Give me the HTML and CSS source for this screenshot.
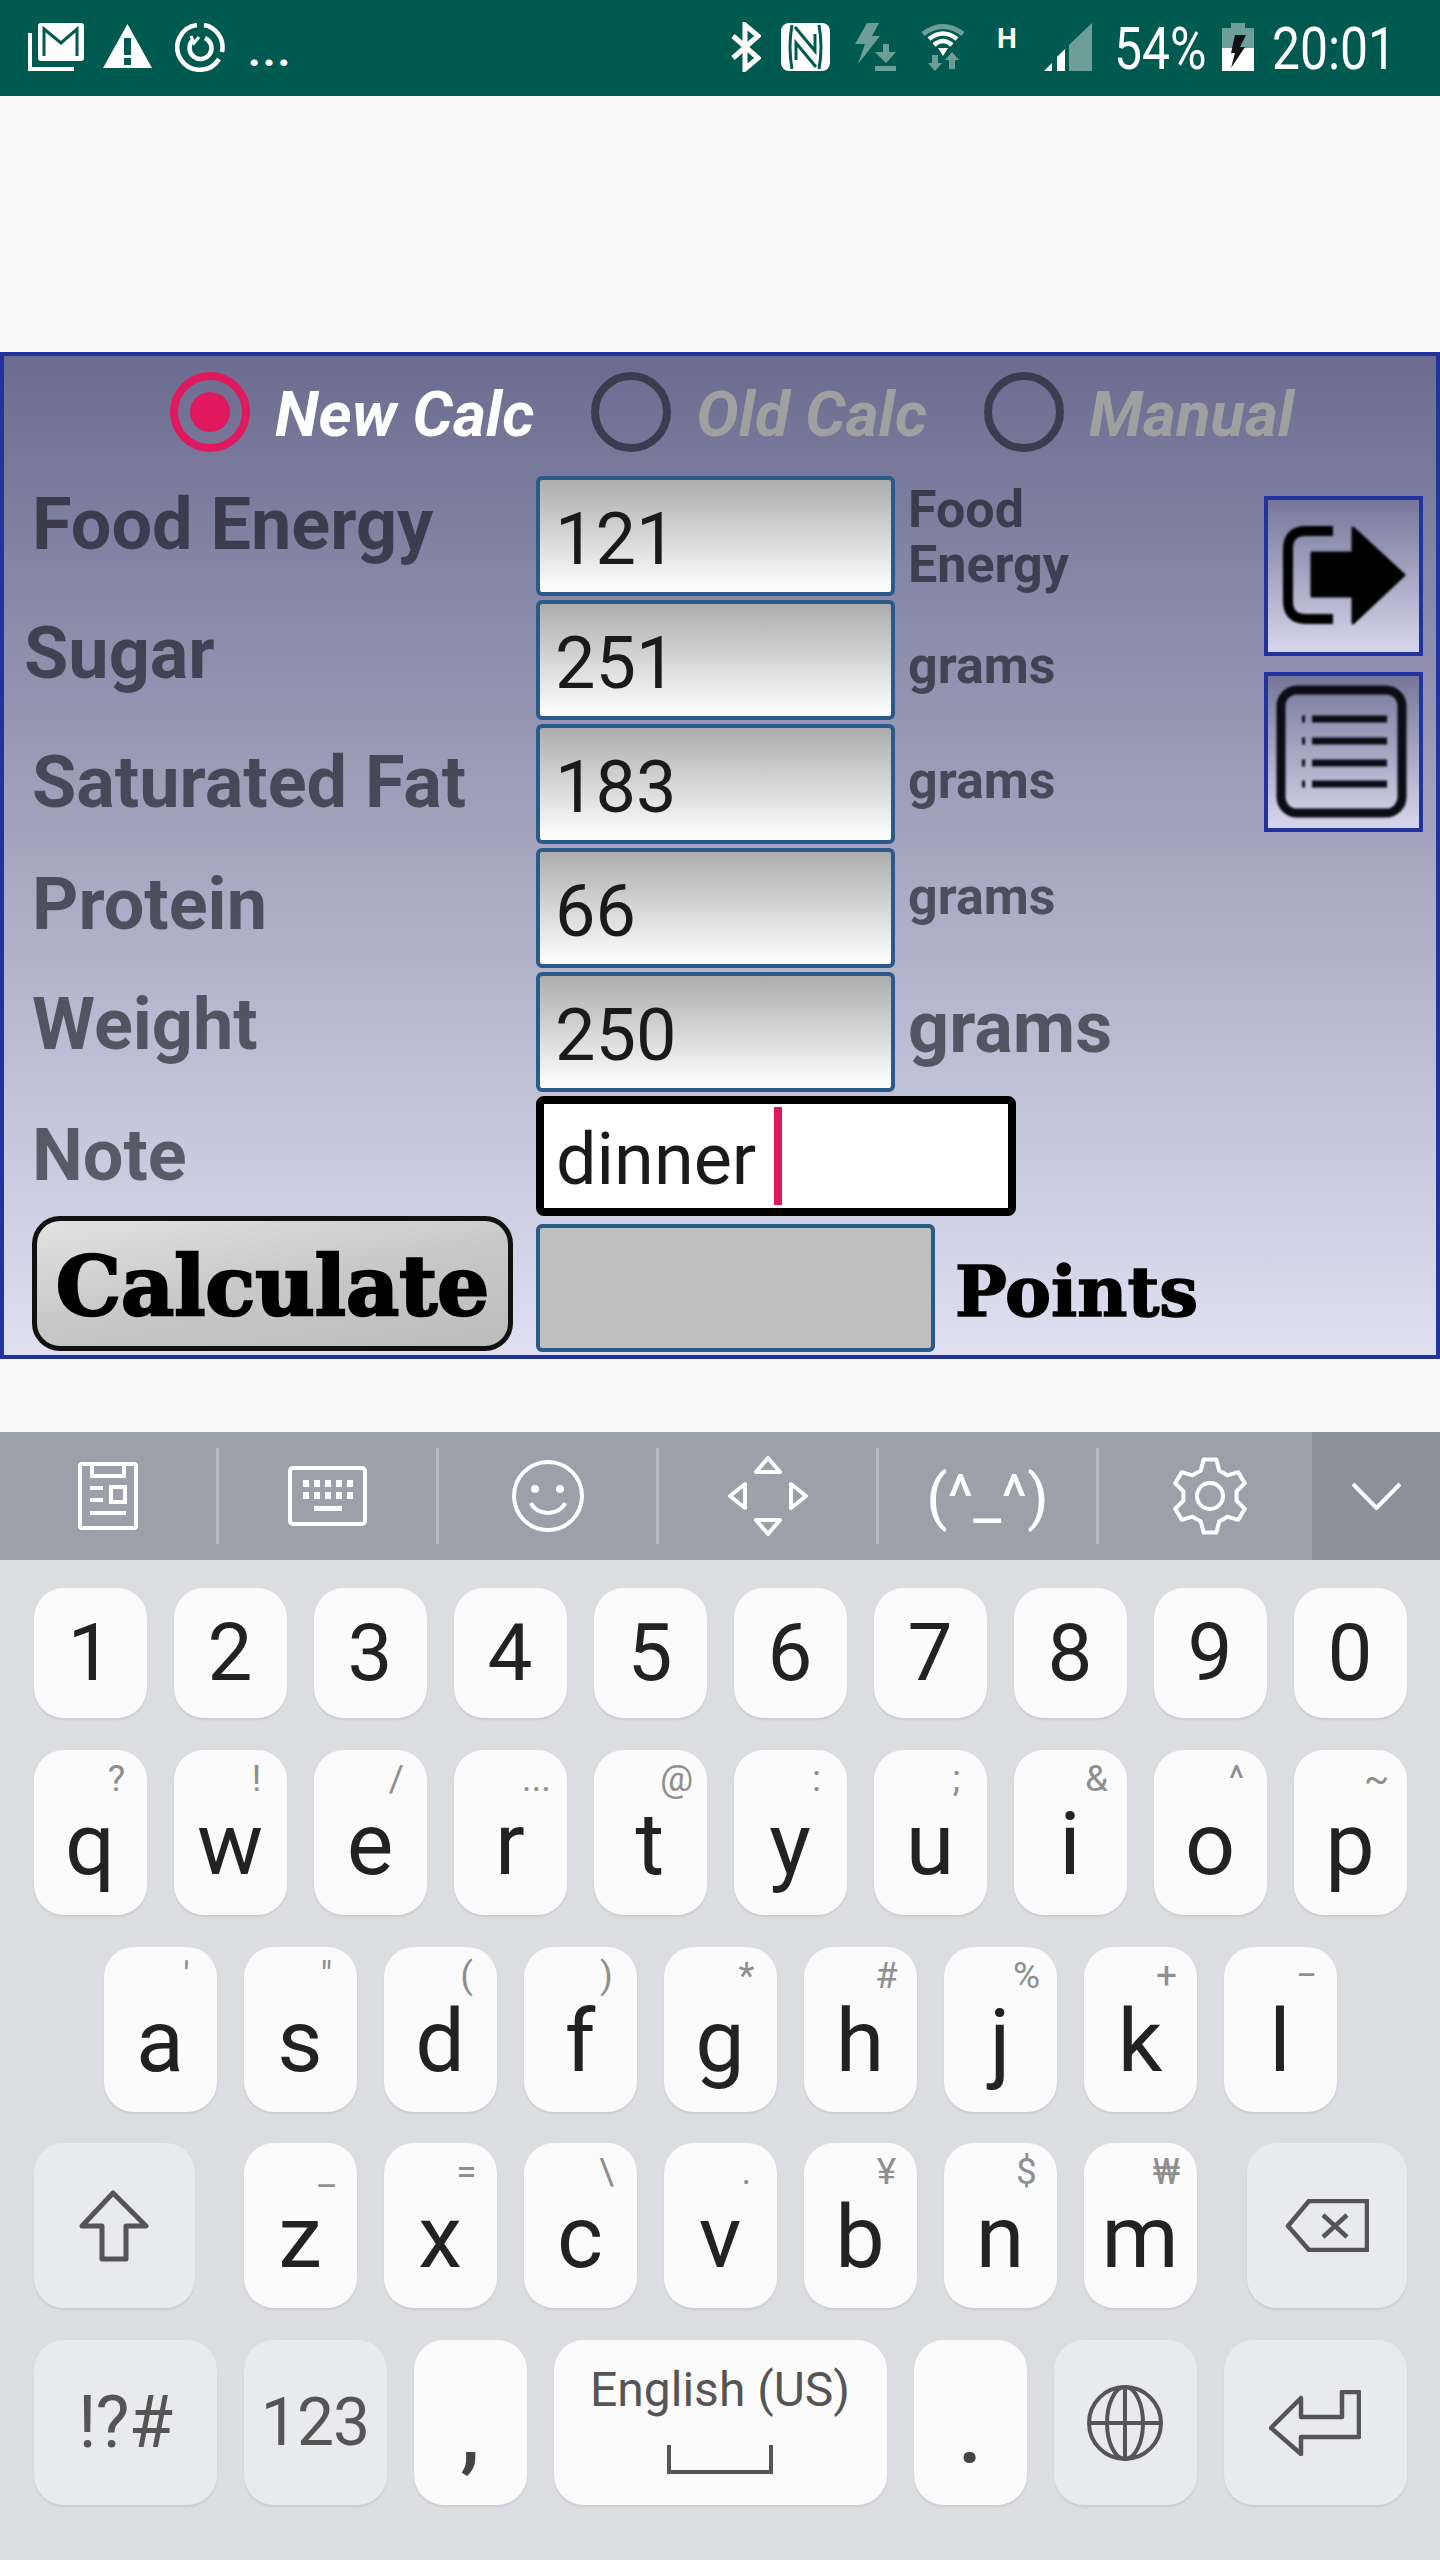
FILE: index.html
```html
<!DOCTYPE html>
<html>
<head>
  <meta charset="utf-8">
  <title>Points Calculator</title>
  <link rel="stylesheet" href="styles.css">
</head>
<body>
  <div class="statusbar">
    <svg class="ic ic-mail" viewBox="0 0 56 48"><path d="M2 10V46H46" fill="none" stroke="#fff" stroke-width="4"/><rect x="10" y="0" width="46" height="38" rx="3" fill="#fff"/><path d="M16 33V6L33 20L49 6V33" fill="none" stroke="#005a4f" stroke-width="3"/></svg>
    <svg class="ic ic-warn" viewBox="0 0 49 44"><path d="M24.5 0L49 44H0Z" fill="#fff"/><rect x="21" y="14" width="7" height="17" fill="#005a4f"/><rect x="21" y="34" width="7" height="7" fill="#005a4f"/></svg>
    <svg class="ic ic-sync" viewBox="0 0 50 50" fill="none" stroke="#fff" stroke-width="4.5"><path d="M29 3A22.5 22.5 0 0 1 47 30"/><path d="M44 37A22.5 22.5 0 1 1 22 3"/><path d="M18 18A11 11 0 1 0 30 16"/><path d="M16 14L19 21L24 15" stroke-width="3"/></svg>
    <span class="dots">...</span>

    <svg class="ic ic-bt" viewBox="0 0 31 50" fill="none" stroke="#fff" stroke-width="5"><path d="M3 14L28 36L15 47V3L28 14L3 36"/></svg>
    <svg class="ic ic-nfc" viewBox="0 0 49 48"><rect width="49" height="48" rx="8" fill="#fff"/><path d="M11 46Q7 24 11 2M38 2Q42 24 38 46M14 4L34 28V11M35 44L15 20V37" fill="none" stroke="#005a4f" stroke-width="3"/></svg>
    <svg class="ic ic-flash" viewBox="0 0 42 48" fill="#6d9f98"><path d="M12 0H24L17 13H25L3 41L10 21H0Z"/><path d="M28 21H34V29H41L31 40L20 29H28Z"/><rect x="20" y="43" width="21" height="5"/></svg>
    <svg class="ic ic-wifi" viewBox="0 0 44 49"><path d="M2 12Q22 -3 42 12" fill="none" stroke="#6d9f98" stroke-width="5"/><path d="M8 17Q22 6 36 17M13 23Q22 15 31 23" fill="none" stroke="#fff" stroke-width="4.5"/><path d="M17 26H27L22 34Z" fill="#fff"/><path d="M11 33H17V41H21L14 49L7 41H11ZM31 30L38 38H34V47H28V38H24Z" fill="#6d9f98"/></svg>
    <span class="net">H</span>
    <svg class="ic ic-signal" viewBox="0 0 48 48"><path d="M0 48L8 40V48ZM13 48V34L21 26V48Z" fill="#fff"/><path d="M25 48V22L48 0V48Z" fill="#6d9f98"/></svg>
    <span class="st-text st-pct">54%</span>
    <svg class="ic ic-batt" viewBox="0 0 32 48"><path d="M9 0H23V5H32V25H0V5H9Z" fill="#6d9f98"/><rect y="25" width="32" height="23" fill="#fff"/><path d="M13 12H24L18 24H23L9 45L13 30H9Z" fill="#111"/></svg>
    <span class="st-text st-time">20:01</span>
  </div>

  <div class="panel">
    <div class="modes">
      <span class="radio on"></span><span class="mode active">New Calc</span>
      <span class="radio"></span><span class="mode">Old Calc</span>
      <span class="radio"></span><span class="mode">Manual</span>
    </div>

    <div class="form">
      <div class="rows">
        <div class="row">
          <div class="lbl l1">Food Energy</div>
          <div class="field">121</div>
          <div class="unit u1">Food<br>Energy</div>
        </div>
        <div class="row">
          <div class="lbl l2">Sugar</div>
          <div class="field">251</div>
          <div class="unit u2">grams</div>
        </div>
        <div class="row">
          <div class="lbl l3">Saturated Fat</div>
          <div class="field">183</div>
          <div class="unit u3">grams</div>
        </div>
        <div class="row">
          <div class="lbl l4">Protein</div>
          <div class="field">66</div>
          <div class="unit u4">grams</div>
        </div>
        <div class="row">
          <div class="lbl l5">Weight</div>
          <div class="field">250</div>
          <div class="unit u5">grams</div>
        </div>
        <div class="row row-note">
          <div class="lbl l6">Note</div>
          <div class="note">dinner<span class="caret"></span></div>
        </div>
        <div class="row row-calc">
          <div class="calc-btn">Calculate</div>
          <div class="result"></div>
          <div class="points">Points</div>
        </div>
      </div>

      <div class="side">
        <div class="side-btn">
          <svg viewBox="0 0 151 152"><path d="M65 31H38Q20 31 20 49V101Q20 119 38 119H65" fill="none" stroke="#000" stroke-width="10"/><path d="M44 53H85V28L136 75L85 123V96H44Z" stroke="#000" stroke-width="3" stroke-linejoin="round"/></svg>
        </div>
        <div class="side-btn">
          <svg viewBox="0 0 151 152" fill="none" stroke="#0c0c14"><rect x="13" y="14" width="121" height="123" rx="16" stroke-width="9"/><path d="M44 43H119M44 65H119M44 87H119M44 108H119" stroke-width="7"/><path d="M34 43H37M34 65H37M34 87H37M34 108H37" stroke-width="7"/></svg>
        </div>
      </div>
    </div>
  </div>

  <div class="keyboard">
    <div class="toolbar">
      <div class="tool tool-first">
        <svg class="t-clip" viewBox="0 0 60 68" fill="none" stroke="#fff" stroke-width="4"><rect x="2" y="2" width="56" height="64" rx="2"/><path d="M14 2V14H46V2"/><path d="M12 26H25M12 38H25M12 51H48"/><rect x="33" y="25" width="14" height="15"/></svg>
      </div>
      <div class="tool">
        <svg class="t-keys" viewBox="0 0 79 60"><rect x="2" y="2" width="75" height="56" rx="3" fill="none" stroke="#fff" stroke-width="4"/><path d="M15 14h6v7h-6zM26 14h6v7h-6zM37 14h6v7h-6zM48 14h6v7h-6zM59 14h6v7h-6zM15 26h6v7h-6zM26 26h6v7h-6zM37 26h6v7h-6zM48 26h6v7h-6zM59 26h6v7h-6zM26 40h28v5h-28z" fill="#fff"/></svg>
      </div>
      <div class="tool">
        <svg class="t-smile" viewBox="0 0 72 72"><circle cx="36" cy="36" r="34" fill="none" stroke="#fff" stroke-width="4"/><circle cx="23" cy="29" r="4" fill="#fff"/><circle cx="48" cy="29" r="4" fill="#fff"/><path d="M19 43A18 15 0 0 0 53 43" fill="none" stroke="#fff" stroke-width="4"/></svg>
      </div>
      <div class="tool">
        <svg class="t-move" viewBox="0 0 80 80" fill="none" stroke="#fff" stroke-width="4" stroke-linejoin="round"><path d="M40 2L52 16H28Z"/><path d="M28 64H52L40 78Z"/><path d="M2 40L17 28V52Z"/><path d="M63 28L78 40L63 52Z"/></svg>
      </div>
      <div class="tool"><span class="kaomoji">(^_^)</span></div>
      <div class="tool tool-gear">
        <svg class="t-gear" viewBox="0 0 74 78" fill="none" stroke="#fff" stroke-width="4" stroke-linejoin="round"><path d="M27.8 13.6L30.6 2.6H43.4L46.2 13.6L54.4 18.3L65.3 15.2L71.8 26.3L63.6 34.3V43.7L71.8 51.7L65.3 62.8L54.4 59.7L46.2 64.4L43.4 75.4H30.6L27.8 64.4L19.6 59.7L8.7 62.8L2.2 51.7L10.4 43.7V34.3L2.2 26.3L8.7 15.2L19.6 18.3Z"/><circle cx="37" cy="39" r="13"/></svg>
      </div>
      <div class="tool-close">
        <svg class="t-down" viewBox="0 0 51 28" fill="none" stroke="#fff" stroke-width="4"><path d="M2 2L25.5 26L49 2"/></svg>
      </div>
    </div>

    <div class="keys">
      <div class="krow digits">
        <div class="key">1</div><div class="key">2</div><div class="key">3</div><div class="key">4</div><div class="key">5</div><div class="key">6</div><div class="key">7</div><div class="key">8</div><div class="key">9</div><div class="key">0</div>
      </div>
      <div class="krow">
        <div class="key">q<span class="sup">?</span></div>
        <div class="key">w<span class="sup">!</span></div>
        <div class="key">e<span class="sup">/</span></div>
        <div class="key">r<span class="sup">...</span></div>
        <div class="key">t<span class="sup">@</span></div>
        <div class="key">y<span class="sup">:</span></div>
        <div class="key">u<span class="sup">;</span></div>
        <div class="key">i<span class="sup">&amp;</span></div>
        <div class="key">o<span class="sup">^</span></div>
        <div class="key">p<span class="sup">~</span></div>
      </div>
      <div class="krow krow-mid">
        <div class="key">a<span class="sup">'</span></div>
        <div class="key">s<span class="sup">"</span></div>
        <div class="key">d<span class="sup">(</span></div>
        <div class="key">f<span class="sup">)</span></div>
        <div class="key">g<span class="sup">*</span></div>
        <div class="key">h<span class="sup">#</span></div>
        <div class="key">j<span class="sup">%</span></div>
        <div class="key">k<span class="sup">+</span></div>
        <div class="key">l<span class="sup">−</span></div>
      </div>
      <div class="krow">
        <div class="key fn k-shift">
          <svg class="i-shift" viewBox="0 0 70 72" fill="none" stroke="#555" stroke-width="5" stroke-linejoin="round"><path d="M34 3L67 36H47V69H23V36H3Z"/></svg>
        </div>
        <div class="key">z<span class="sup">_</span></div>
        <div class="key">x<span class="sup">=</span></div>
        <div class="key">c<span class="sup">\</span></div>
        <div class="key">v<span class="sup">.</span></div>
        <div class="key">b<span class="sup">¥</span></div>
        <div class="key">n<span class="sup">$</span></div>
        <div class="key">m<span class="sup">₩</span></div>
        <div class="key fn k-back">
          <svg class="i-back" viewBox="0 0 84 53" fill="none" stroke="#555" stroke-width="4.5" stroke-linejoin="round"><path d="M24 2H82V51H24L3 27Z"/><path d="M38 16L62 38M62 16L38 38"/></svg>
        </div>
      </div>
      <div class="krow">
        <div class="key fn k-sym">!?#</div>
        <div class="key fn k-num">123</div>
        <div class="key k-punct">,</div>
        <div class="key k-space">
          <span class="lang">English (US)</span>
          <svg class="i-space" viewBox="0 0 106 29" fill="none" stroke="#555" stroke-width="4"><path d="M2 0V27H104V0"/></svg>
        </div>
        <div class="key k-punct">.</div>
        <div class="key fn k-globe">
          <svg class="i-globe" viewBox="0 0 76 76" fill="none" stroke="#555" stroke-width="4"><circle cx="38" cy="38" r="36"/><ellipse cx="38" cy="38" rx="18" ry="36"/><path d="M38 2V74M2 38H74"/></svg>
        </div>
        <div class="key fn k-enter">
          <svg class="i-enter" viewBox="0 0 92 66" fill="none" stroke="#555" stroke-width="4.5" stroke-linejoin="round"><path d="M2 38L32 8V27H73V2H90V47H32V64Z"/></svg>
        </div>
      </div>
    </div>
  </div>
</body>
</html>
```

FILE: styles.css
```css
* {
  box-sizing: border-box;
}
body {
  margin: 0;
  width: 1440px;
  height: 2560px;
  overflow: hidden;
  background: #fafafa;
  font-family: Roboto, sans-serif;
}

/* status bar */
.statusbar {
  display: flex;
  align-items: flex-start;
  height: 96px;
  padding: 23px 0 0 28px;
  background: #005a4f;
  color: #fff;
}
.ic {
  display: block;
  flex: none;
}
.ic-mail { width: 56px; height: 48px; }
.ic-warn { width: 49px; height: 44px; margin-left: 19px; margin-top: 1px; }
.ic-sync { width: 50px; height: 50px; margin-left: 23px; margin-top: -1px; }
.dots {
  width: 44px;
  margin-left: 23px;
  margin-top: 6px;
  font-size: 44px;
  line-height: 44px;
  font-weight: 700;
  letter-spacing: 2px;
}
.ic-bt { width: 31px; height: 50px; margin-left: 438px; margin-top: -1px; }
.ic-nfc { width: 49px; height: 48px; margin-left: 20px; }
.ic-flash { width: 42px; height: 48px; margin-left: 25px; }
.ic-wifi { width: 44px; height: 49px; margin-left: 24px; margin-top: -1px; }
.net {
  width: 17px;
  margin-left: 32px;
  margin-top: 4px;
  font-size: 28px;
  line-height: 24px;
  font-weight: 700;
}
.ic-signal { width: 48px; height: 48px; margin-left: 30px; }
.st-text {
  font-size: 60px;
  line-height: 52px;
  white-space: nowrap;
  transform: scaleX(.83);
  transform-origin: left top;
}
.st-pct { width: 92px; margin-left: 22px; }
.ic-batt { width: 32px; height: 48px; margin-left: 16px; }
.st-time { width: 123px; margin-left: 18px; }

/* calculator panel */
.panel {
  height: 1007px;
  margin-top: 256px;
  border: 4px solid #2233a0;
  background: linear-gradient(#6c6c90, #e0e0f2);
}
.modes {
  display: flex;
  align-items: center;
  height: 80px;
  margin-top: 16px;
  padding-left: 166px;
}
.radio {
  position: relative;
  flex: none;
  width: 80px;
  height: 80px;
  border: 8px solid #3c3c50;
  border-radius: 50%;
}
.radio.on {
  border-color: #e0195f;
}
.radio.on::after {
  content: "";
  position: absolute;
  left: 12px;
  top: 12px;
  width: 40px;
  height: 40px;
  border-radius: 50%;
  background: #e0195f;
}
.mode {
  margin: 4px 57px 0 25px;
  font-size: 63.5px;
  font-weight: 700;
  font-style: italic;
  white-space: nowrap;
  color: #a0a0a0;
}
.mode.active {
  color: #fff;
}
.form {
  display: flex;
  margin-top: 24px;
}
.rows {
  width: 1260px;
}
.row {
  display: flex;
  height: 124px;
}
.lbl {
  flex: none;
  width: 532px;
  padding-left: 28px;
  font-size: 72px;
  line-height: 72px;
  font-weight: 700;
  white-space: nowrap;
  color: rgba(15, 15, 24, .6);
}
.l1 { padding-top: 13px; }
.l2 { padding-top: 18px; padding-left: 20px; }
.l3 { padding-top: 23px; }
.l4 { padding-top: 21px; }
.l5 { padding-top: 17px; }
.l6 { padding-top: 24px; }
.field {
  flex: none;
  width: 359px;
  height: 120px;
  padding: 24px 0 0 15px;
  border: 4px solid #2a5a8a;
  border-radius: 6px;
  background: linear-gradient(#adadad, #fff);
  font-size: 72px;
  line-height: 72px;
  color: #1a1a1a;
}
.unit {
  margin-left: 13px;
  font-size: 52px;
  line-height: 55px;
  font-weight: 700;
  color: rgba(15, 15, 24, .6);
}
.u1 { padding-top: 6px; }
.u2 { padding-top: 38px; }
.u3 { padding-top: 29px; }
.u4 { padding-top: 21px; }
.u5 { padding-top: 20px; font-size: 72px; line-height: 72px; }
.row-note {
  height: 120px;
}
.note {
  display: flex;
  align-items: flex-start;
  flex: none;
  width: 480px;
  height: 120px;
  padding: 20px 0 0 12px;
  border: 8px solid #000;
  border-radius: 8px;
  background: #fff;
  font-size: 72px;
  line-height: 72px;
  color: #1a1a1a;
}
.caret {
  width: 8px;
  height: 98px;
  margin: -17px 0 0 18px;
  background: #e0195f;
}
.row-calc {
  height: 136px;
}
.calc-btn {
  flex: none;
  width: 481px;
  height: 135px;
  margin-left: 28px;
  border: 5px solid #111;
  border-radius: 28px;
  background: linear-gradient(170deg, #e2e2e2, #c8c8c8 50%, #bcbcbc);
  font-family: "DejaVu Serif", serif;
  font-size: 82px;
  line-height: 131px;
  font-weight: 700;
  text-align: center;
  color: #000;
  -webkit-text-stroke: 2.5px #000;
  filter: blur(.6px);
}
.result {
  flex: none;
  width: 399px;
  height: 128px;
  margin: 8px 0 0 23px;
  border: 4px solid #2a5a8a;
  border-radius: 6px;
  background: #bfbfbf;
}
.points {
  margin: 36px 0 0 20px;
  font-family: "DejaVu Serif", serif;
  font-size: 69px;
  line-height: 80px;
  font-weight: 700;
  color: #000;
  -webkit-text-stroke: 1.5px #000;
  filter: blur(.6px);
}
.side {
  display: flex;
  flex-direction: column;
  gap: 16px;
  margin-top: 20px;
}
.side-btn {
  width: 159px;
  height: 160px;
  border: 4px solid #2233a0;
  background: linear-gradient(#76769a, #d6d6ec);
}
.side-btn svg {
  display: block;
  width: 151px;
  height: 152px;
  filter: blur(1.2px);
}

/* keyboard */
.keyboard {
  margin-top: 73px;
}
.toolbar {
  display: flex;
  align-items: center;
  height: 128px;
  background: #9d9fa9;
}
.tool {
  display: flex;
  align-items: center;
  justify-content: center;
  width: 220px;
  height: 96px;
  border-right: 3px solid #b8bac3;
  color: #fff;
}
.tool-first {
  width: 219px;
}
.tool-gear {
  width: 214px;
  padding-left: 8px;
  border-right: 0;
}
.tool-close {
  display: flex;
  align-items: center;
  justify-content: center;
  width: 128px;
  height: 128px;
  margin-left: -1px;
  background: #8d8f99;
}
.t-clip { width: 60px; height: 68px; }
.t-keys { width: 79px; height: 60px; }
.t-smile { width: 72px; height: 72px; }
.t-move { width: 80px; height: 80px; }
.t-gear { width: 74px; height: 78px; }
.t-down { width: 51px; height: 28px; }
.kaomoji {
  font-size: 62px;
}
.keys {
  display: flex;
  flex-direction: column;
  gap: 31.75px;
  height: 1000px;
  padding: 28px 33.5px 0;
  background: #dcdde1;
}
.krow {
  display: flex;
  gap: 27px;
}
.krow-mid {
  justify-content: center;
}
.key {
  position: relative;
  flex: none;
  width: 113px;
  height: 165px;
  padding-top: 50px;
  border-radius: 30px;
  background: #fbfbfb;
  box-shadow: 0 2px 2px rgba(0, 0, 0, .08);
  font-size: 88px;
  line-height: 88px;
  text-align: center;
  color: #222;
}
.digits .key {
  height: 130px;
  padding-top: 25px;
  font-size: 80px;
  line-height: 80px;
}
.sup {
  position: absolute;
  top: 11px;
  right: 0;
  width: 60px;
  font-size: 37px;
  line-height: 36px;
  color: #8f8f8f;
}
.fn {
  display: flex;
  align-items: center;
  justify-content: center;
  padding: 0;
  background: #e9eaee;
  color: #555;
}
.k-shift { width: 161px; margin-right: 22px; }
.k-back { width: 160px; margin-left: 23px; }
.k-sym { width: 183px; font-size: 72px; letter-spacing: -1px; }
.k-num { width: 143px; font-size: 66px; letter-spacing: -1px; }
.k-punct { color: #444; padding-top: 48px; font-weight: 500; }
.k-space {
  width: 333px;
  padding-top: 22px;
  color: #555;
  font-size: 48px;
  line-height: 56px;
}
.lang {
  display: block;
}
.i-space {
  display: block;
  width: 106px;
  height: 29px;
  margin: 27px auto 0;
}
.k-globe { width: 143px; }
.k-enter { width: 183px; }
.i-shift { width: 70px; height: 72px; }
.i-back { width: 84px; height: 53px; }
.i-globe { width: 76px; height: 76px; }
.i-enter { width: 92px; height: 66px; }
```
